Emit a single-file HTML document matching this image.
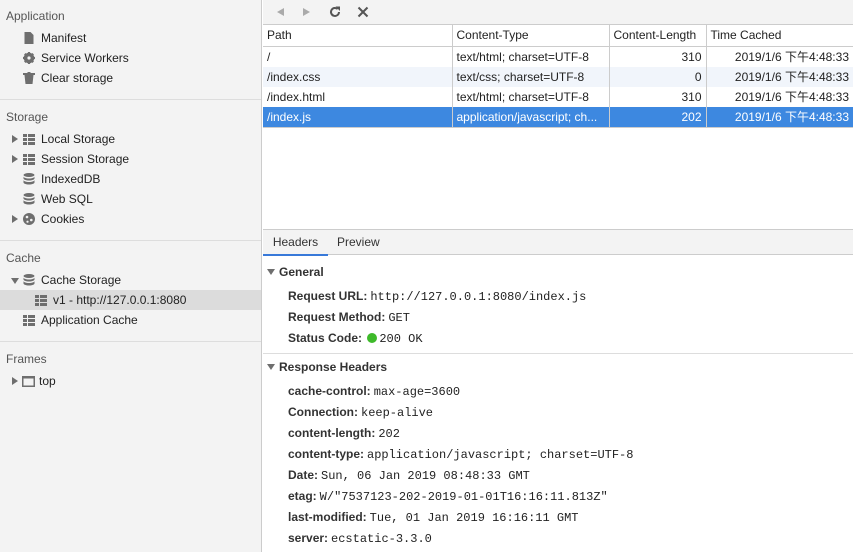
<!DOCTYPE html>
<html><head><meta charset="utf-8"><style>
*{box-sizing:border-box;margin:0;padding:0}
body{width:853px;height:552px;overflow:hidden;font-family:"Liberation Sans","Noto Sans CJK SC",sans-serif;font-size:12px;color:#303942;background:#fff;position:relative}
#side{position:absolute;left:0;top:0;width:262px;height:552px;background:#f3f3f3;border-right:1px solid #ccc}
.sec{position:absolute;left:6px;color:#555;font-size:12px}
.it{position:absolute;left:0;width:261px;height:20px;line-height:20px;color:#222}
.it .t{position:absolute;left:41px}
.ic{position:absolute;top:4px;left:23px;width:12px;height:12px}
.arr{position:absolute;left:12px;top:6px;width:0;height:0;border-left:6px solid #6e6e6e;border-top:4px solid transparent;border-bottom:4px solid transparent}
.arrd{position:absolute;left:11px;top:8px;border-top:6px solid #6e6e6e;border-left:4px solid transparent;border-right:4px solid transparent}
.sep{position:absolute;left:0;width:261px;border-top:1px solid #ddd}
#main{position:absolute;left:263px;top:0;right:0;height:552px}
#tb{height:25px;background:#f3f3f3;border-bottom:1px solid #ccc;position:relative}
table{border-collapse:collapse;width:590px;font-size:12px}
td{height:20px;line-height:20px;padding:0 4px;border-right:1px solid #ccc;white-space:nowrap;color:#222;overflow:hidden}
th{height:21px;padding:0 4px;font-weight:normal;text-align:left;border-right:1px solid #ccc;border-bottom:1px solid #ccc;color:#222;background:#fff}
.r{text-align:right}
tr.alt td{background:#f1f5fb}
tr.sel td{background:#3d88e0;color:#fff;border-bottom:1px solid #ccc}
#tabs{position:absolute;top:229px;left:0;right:0;height:26px;background:#f3f3f3;border-top:1px solid #ccc;border-bottom:1px solid #ccc}
.tab{position:absolute;top:0;height:25px;line-height:25px;color:#333}
.h{position:absolute;left:4px;font-weight:bold;color:#333}
.h .ad{display:inline-block;border-top:6px solid #6e6e6e;border-left:4px solid transparent;border-right:4px solid transparent;margin-right:4px;vertical-align:1px}
.kv{position:absolute;left:25px;color:#222}
.kv b{color:#333}
.kv span{font-family:"Liberation Mono",monospace;font-size:12px;margin-left:3px;color:#222}
</style></head><body>
<div id="side">
<div class="sec" style="top:9px">Application</div>
<div class="it" style="top:28px"><svg class="ic" viewBox="0 0 12 12"><path d="M1.5 0h6l3 3v9h-9z" fill="#6e6e6e"/></svg><span class="t">Manifest</span></div>
<div class="it" style="top:48px"><svg class="ic" viewBox="0 0 12 12"><circle cx="6" cy="6" r="4" fill="none" stroke="#6e6e6e" stroke-width="2.6"/><path d="M6 0v12M0 6h12M1.8 1.8l8.4 8.4M10.2 1.8l-8.4 8.4" stroke="#6e6e6e" stroke-width="2.2"/><circle cx="6" cy="6" r="1.6" fill="#f3f3f3"/></svg><span class="t">Service Workers</span></div>
<div class="it" style="top:68px"><svg class="ic" viewBox="0 0 12 12"><path d="M0 1h12v2H0zM4.5 0h3v1h-3zM1.5 3h9l-1 9h-7z" fill="#6e6e6e"/></svg><span class="t">Clear storage</span></div>
<div class="sep" style="top:99px"></div>
<div class="sec" style="top:110px">Storage</div>
<div class="it" style="top:129px"><div class="arr"></div><svg class="ic" viewBox="0 0 12 12"><path d="M0 1h4v3H0zM5 1h7v3H5zM0 5h4v3H0zM5 5h7v3H5zM0 9h4v3H0zM5 9h7v3H5z" fill="#6e6e6e"/></svg><span class="t">Local Storage</span></div>
<div class="it" style="top:149px"><div class="arr"></div><svg class="ic" viewBox="0 0 12 12"><path d="M0 1h4v3H0zM5 1h7v3H5zM0 5h4v3H0zM5 5h7v3H5zM0 9h4v3H0zM5 9h7v3H5z" fill="#6e6e6e"/></svg><span class="t">Session Storage</span></div>
<div class="it" style="top:169px"><svg class="ic" viewBox="0 0 12 12"><ellipse cx="6" cy="2" rx="5.5" ry="2" fill="#6e6e6e"/><path d="M.5 3.5v2c0 1 2.5 2 5.5 2s5.5-1 5.5-2v-2c0 1-2.5 2-5.5 2S.5 4.5.5 3.5zM.5 7v2.5c0 1 2.5 2 5.5 2s5.5-1 5.5-2V7c0 1-2.5 2-5.5 2S.5 8 .5 7z" fill="#6e6e6e"/></svg><span class="t">IndexedDB</span></div>
<div class="it" style="top:189px"><svg class="ic" viewBox="0 0 12 12"><ellipse cx="6" cy="2" rx="5.5" ry="2" fill="#6e6e6e"/><path d="M.5 3.5v2c0 1 2.5 2 5.5 2s5.5-1 5.5-2v-2c0 1-2.5 2-5.5 2S.5 4.5.5 3.5zM.5 7v2.5c0 1 2.5 2 5.5 2s5.5-1 5.5-2V7c0 1-2.5 2-5.5 2S.5 8 .5 7z" fill="#6e6e6e"/></svg><span class="t">Web SQL</span></div>
<div class="it" style="top:209px"><div class="arr"></div><svg class="ic" viewBox="0 0 12 12"><circle cx="6" cy="6" r="6" fill="#6e6e6e"/><circle cx="4" cy="4" r="1.3" fill="#f3f3f3"/><circle cx="8.3" cy="7" r="1.3" fill="#f3f3f3"/><circle cx="4.5" cy="8.7" r="1.1" fill="#f3f3f3"/></svg><span class="t">Cookies</span></div>
<div class="sep" style="top:240px"></div>
<div class="sec" style="top:251px">Cache</div>
<div class="it" style="top:270px"><div class="arrd"></div><svg class="ic" viewBox="0 0 12 12"><ellipse cx="6" cy="2" rx="5.5" ry="2" fill="#6e6e6e"/><path d="M.5 3.5v2c0 1 2.5 2 5.5 2s5.5-1 5.5-2v-2c0 1-2.5 2-5.5 2S.5 4.5.5 3.5zM.5 7v2.5c0 1 2.5 2 5.5 2s5.5-1 5.5-2V7c0 1-2.5 2-5.5 2S.5 8 .5 7z" fill="#6e6e6e"/></svg><span class="t">Cache Storage</span></div>
<div class="it" style="top:290px;background:#dcdcdc"><svg class="ic" style="left:35px" viewBox="0 0 12 12"><path d="M0 1h4v3H0zM5 1h7v3H5zM0 5h4v3H0zM5 5h7v3H5zM0 9h4v3H0zM5 9h7v3H5z" fill="#6e6e6e"/></svg><span class="t" style="left:53px">v1 - http://127.0.0.1:8080</span></div>
<div class="it" style="top:310px"><svg class="ic" viewBox="0 0 12 12"><path d="M0 1h4v3H0zM5 1h7v3H5zM0 5h4v3H0zM5 5h7v3H5zM0 9h4v3H0zM5 9h7v3H5z" fill="#6e6e6e"/></svg><span class="t">Application Cache</span></div>
<div class="sep" style="top:341px"></div>
<div class="sec" style="top:352px">Frames</div>
<div class="it" style="top:371px"><div class="arr"></div><svg class="ic" style="left:22px;width:13px" viewBox="0 0 13 12"><rect x=".75" y="1.75" width="11.5" height="9.5" fill="none" stroke="#6e6e6e" stroke-width="1.5"/><path d="M0 1h13v2.5H0z" fill="#6e6e6e"/></svg><span class="t" style="left:39px">top</span></div>
</div>
<div id="main">
<div id="tb">
<svg style="position:absolute;left:12px;top:7px" width="10" height="10"><path d="M9 1v8L2 5z" fill="#aaa"/></svg>
<svg style="position:absolute;left:39px;top:7px" width="10" height="10"><path d="M1 1v8l7-4z" fill="#aaa"/></svg>
<svg style="position:absolute;left:65px;top:5px" width="14" height="14" viewBox="0 0 14 14"><path d="M11 7a4 4 0 1 1-1.3-3" fill="none" stroke="#555" stroke-width="2"/><path d="M7.5 1.5h4.5v4.5z" fill="#555"/></svg>
<svg style="position:absolute;left:94px;top:6px" width="12" height="12"><path d="M1.5 1.5l9 9M10.5 1.5l-9 9" stroke="#555" stroke-width="2"/></svg>
</div>
<table>
<tr><th style="width:189px">Path</th><th style="width:157px">Content-Type</th><th style="width:97px">Content-Length</th><th style="border-right:none">Time Cached</th></tr>
<tr><td>/</td><td>text/html; charset=UTF-8</td><td class="r">310</td><td class="r" style="border-right:none">2019/1/6 下午4:48:33</td></tr>
<tr class="alt"><td>/index.css</td><td>text/css; charset=UTF-8</td><td class="r">0</td><td class="r" style="border-right:none">2019/1/6 下午4:48:33</td></tr>
<tr><td>/index.html</td><td>text/html; charset=UTF-8</td><td class="r">310</td><td class="r" style="border-right:none">2019/1/6 下午4:48:33</td></tr>
<tr class="sel"><td>/index.js</td><td>application/javascript; ch...</td><td class="r">202</td><td class="r" style="border-right:none">2019/1/6 下午4:48:33</td></tr>
</table>
<div id="tabs">
<div class="tab" style="left:0;width:65px;text-align:center;border-bottom:2px solid #3879d9;height:26px">Headers</div>
<div class="tab" style="left:74px">Preview</div>
</div>
<div class="h" style="top:265px"><i class="ad"></i>General</div>
<div class="kv" style="top:289px"><b>Request URL:</b><span>http://127.0.0.1:8080/index.js</span></div>
<div class="kv" style="top:310px"><b>Request Method:</b><span>GET</span></div>
<div class="kv" style="top:331px"><b>Status Code:</b> <i style="display:inline-block;width:10px;height:10px;border-radius:50%;background:#3eba2a;vertical-align:-1px;margin-left:2px"></i><span style="margin-left:2px">200 OK</span></div>
<div style="position:absolute;top:353px;left:0;right:0;border-top:1px solid #ddd"></div>
<div class="h" style="top:360px"><i class="ad"></i>Response Headers</div>
<div class="kv" style="top:384px"><b>cache-control:</b><span>max-age=3600</span></div>
<div class="kv" style="top:405px"><b>Connection:</b><span>keep-alive</span></div>
<div class="kv" style="top:426px"><b>content-length:</b><span>202</span></div>
<div class="kv" style="top:447px"><b>content-type:</b><span>application/javascript; charset=UTF-8</span></div>
<div class="kv" style="top:468px"><b>Date:</b><span>Sun, 06 Jan 2019 08:48:33 GMT</span></div>
<div class="kv" style="top:489px"><b>etag:</b><span>W/"7537123-202-2019-01-01T16:16:11.813Z"</span></div>
<div class="kv" style="top:510px"><b>last-modified:</b><span>Tue, 01 Jan 2019 16:16:11 GMT</span></div>
<div class="kv" style="top:531px"><b>server:</b><span>ecstatic-3.3.0</span></div>
</div>
</body></html>
